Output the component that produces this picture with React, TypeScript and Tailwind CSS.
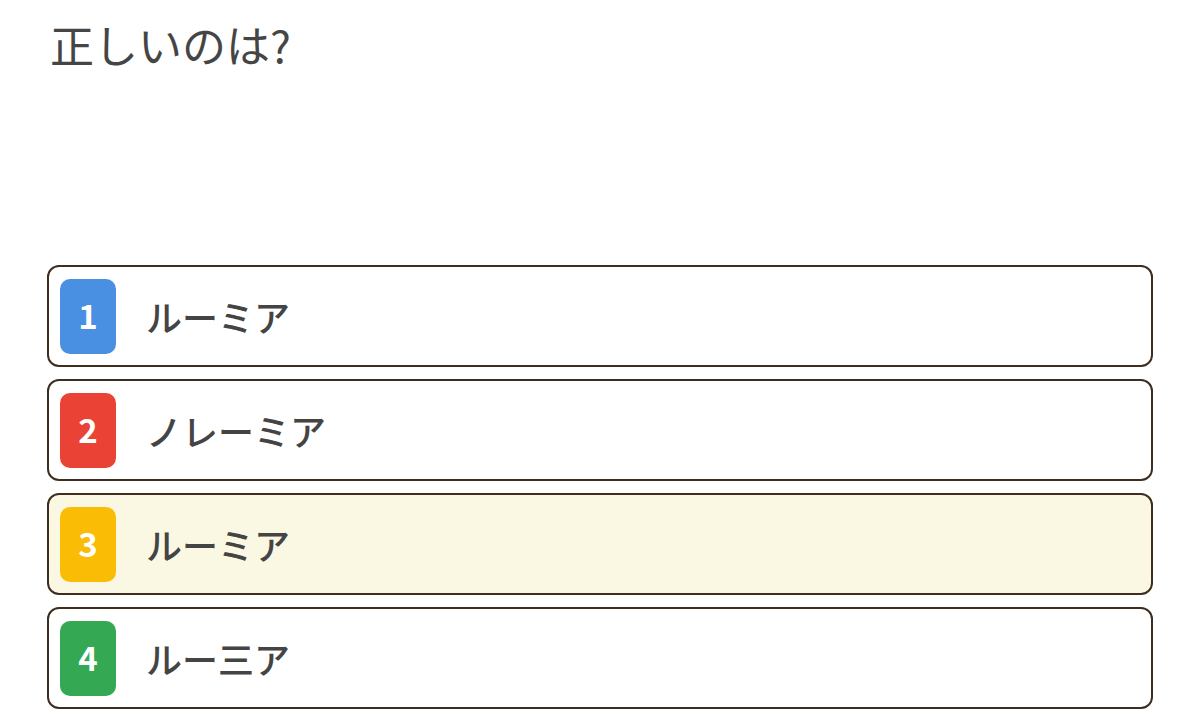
import React from "react";

const options = [
  { n: "1", label: "ルーミア", color: "bg-[#4a90e2]", selected: false },
  { n: "2", label: "ノレーミア", color: "bg-[#ea4335]", selected: false },
  { n: "3", label: "ルーミア", color: "bg-[#fbbc05]", selected: true },
  { n: "4", label: "ルー三ア", color: "bg-[#34a853]", selected: false },
];

const App = () => {
  return (
    <div
      className="min-h-screen w-full bg-white px-[47px] pt-[14px]"
      style={{ fontFamily: '"Noto Sans CJK JP", "Noto Sans", sans-serif' }}
    >
      <h1 className="pl-[3px] text-[44px] leading-[60px] text-[#454545]">正しいのは?</h1>
      <div className="mt-[191px] flex flex-col gap-[12px]">
        {options.map(o => (
          <div
            key={o.n}
            className={`flex h-[102px] items-center rounded-[12px] border-2 border-[#3f2d20] px-[11px] ${
              o.selected ? "bg-[#faf8e2]" : "bg-white"
            }`}
          >
            <div
              className={`flex h-[75px] w-[56px] items-center justify-center rounded-[10px] text-[33px] font-semibold text-white ${o.color}`}
            >
              {o.n}
            </div>
            <span className="ml-[30px] text-[36px] font-medium text-[#444]">{o.label}</span>
          </div>
        ))}
      </div>
    </div>
  );
};

export default App;
